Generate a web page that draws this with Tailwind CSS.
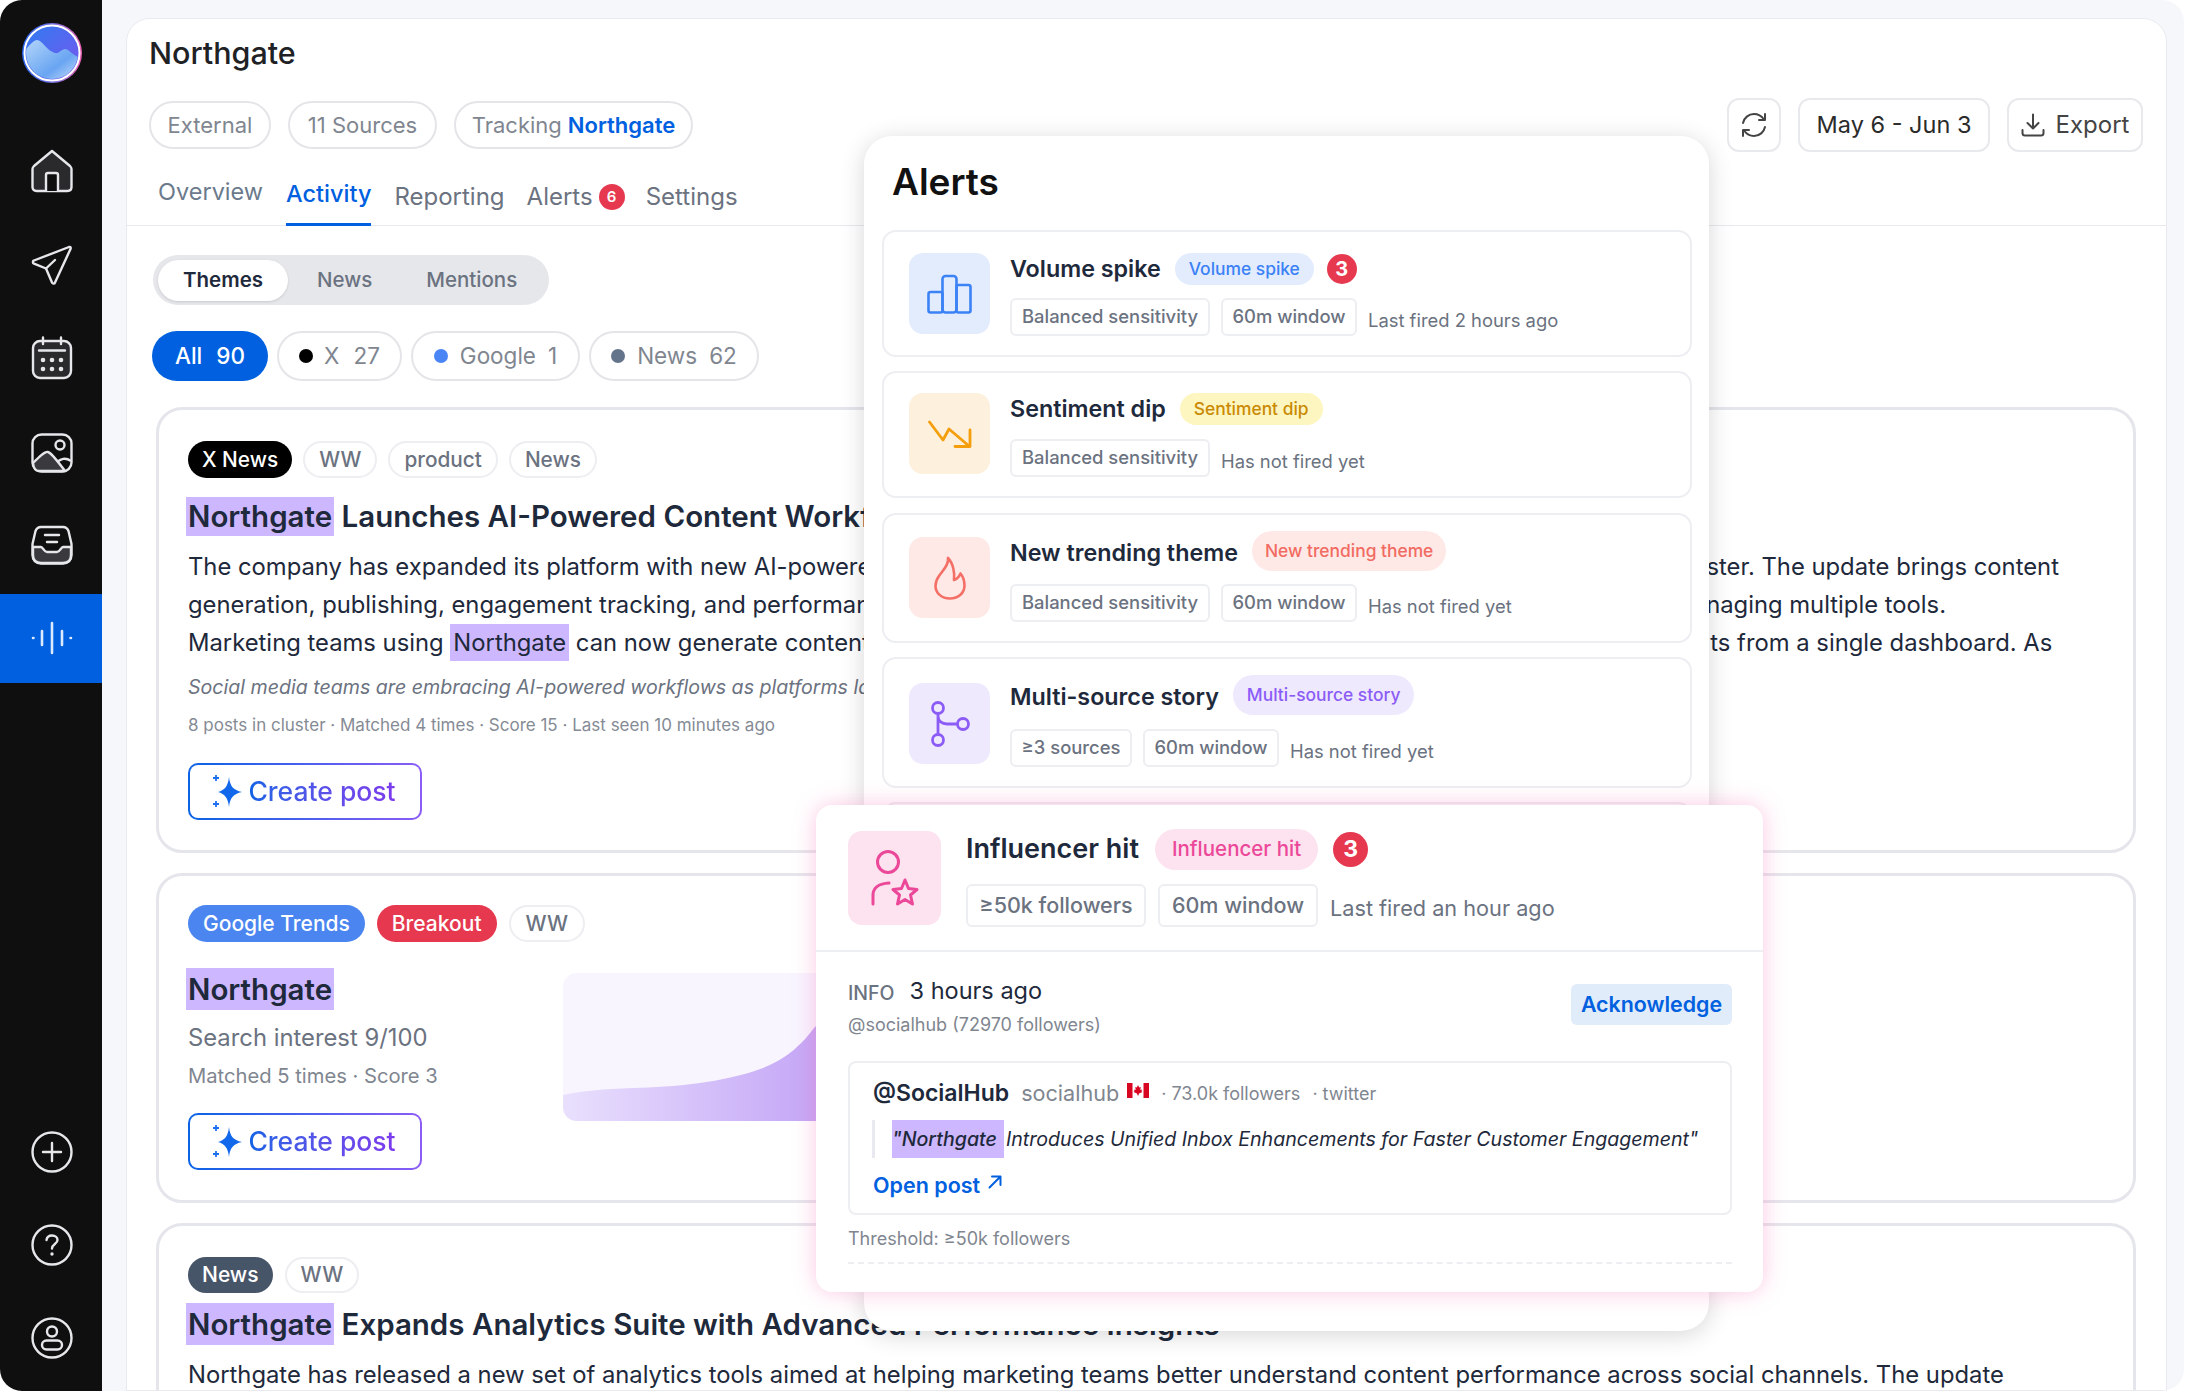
<!doctype html>
<html>
<head>
<meta charset="utf-8" />
<title>Northgate</title>
<script src="https://cdn.jsdelivr.net/npm/@tailwindcss/browser@4"></script>
</head>
<body class="bg-white">
<div class="relative flex w-[2184px] h-[1391px] rounded-[22px] overflow-hidden bg-[#f6f7fb] [font-family:Inter,'Liberation_Sans',sans-serif]">

  <!-- sidebar -->
  <aside class="flex flex-col w-[102px] h-full shrink-0 bg-[#0f0f0f] text-[#e5e7eb]">
    <div class="h-[124px] pt-[22px] pl-[2px] flex justify-center items-start">
      <svg width="62" height="62" viewBox="0 0 62 62">
        <defs>
          <linearGradient id="ring" x1="0" y1="0" x2="1" y2="0"><stop offset="0" stop-color="#2563eb"/><stop offset="0.55" stop-color="#7c6fe0"/><stop offset="1" stop-color="#ec5fb0"/></linearGradient>
          <linearGradient id="sky" x1="0" y1="0" x2="1" y2="1"><stop offset="0" stop-color="#2f7bf0"/><stop offset="1" stop-color="#7a55ee"/></linearGradient>
          <linearGradient id="hill" x1="0" y1="0" x2="1" y2="1"><stop offset="0" stop-color="#b4d6fa"/><stop offset="0.6" stop-color="#69a5f2"/><stop offset="1" stop-color="#d8e6fb"/></linearGradient>
          <clipPath id="disc"><circle cx="31" cy="31" r="26"/></clipPath>
        </defs>
        <circle cx="31" cy="31" r="30" fill="url(#ring)"/>
        <circle cx="31" cy="31" r="27.5" fill="url(#sky)" stroke="#fff" stroke-width="2"/>
        <g clip-path="url(#disc)">
          <path d="M4 28C9 23 13 18 16 18C21 18 26 29 34 31C38 32 41 27 44 27C48 27 52 34 60 36V60H4Z" fill="url(#hill)"/>
        </g>
      </svg>
    </div>
    <a class="h-[93.5px] pl-[2px] flex items-center justify-center">
      <svg width="42" height="44" viewBox="0 0 42 44" fill="#2a2a2c" stroke="#e5e7eb" stroke-width="2.4" stroke-linejoin="round"><path d="M21 2L39 17C40 18 40.500 19 40.500 20V38C40.500 40.500 39 42 36.500 42H5.500C3 42 1.500 40.500 1.500 38V20C1.500 19 2 18 3 17Z"/><path d="M15 42V26C15 25 16 24 17 24H25C26 24 27 25 27 26V42" fill="#0f0f0f"/></svg>
    </a>
    <a class="h-[93.5px] pl-[2px] pt-[2px] flex items-center justify-center">
      <svg width="42" height="42" viewBox="0 0 42 42" fill="none" stroke="#e5e7eb" stroke-width="2.4" stroke-linejoin="round" stroke-linecap="round"><path d="M38 3L3 16.500C1.500 17 1.500 19 3 19.700L15 24.500L21 38.500C21.700 40 23.500 40 24 38.500L39.500 5C40 3.500 39.500 2.500 38 3Z"/><path d="M15 24.500L24 16"/></svg>
    </a>
    <a class="h-[93.5px] pl-[2px] flex items-center justify-center">
      <svg width="42" height="44" viewBox="0 0 42 44" fill="none" stroke="#e5e7eb" stroke-width="2.4" stroke-linecap="round"><rect x="2" y="5" width="38" height="37" rx="7" fill="#2a2a2c"/><path d="M12 1.500V8M30 1.500V8M8 14.500H34"/><g fill="#e5e7eb" stroke="none"><circle cx="12" cy="24" r="2.300"/><circle cx="21" cy="24" r="2.300"/><circle cx="30" cy="24" r="2.300"/><circle cx="12" cy="33" r="2.300"/><circle cx="21" cy="33" r="2.300"/><circle cx="30" cy="33" r="2.300"/></g></svg>
    </a>
    <a class="h-[93.5px] pl-[2px] pt-[3px] flex items-center justify-center">
      <svg width="42" height="40" viewBox="0 0 42 40" fill="none" stroke="#e5e7eb" stroke-width="2.4" stroke-linejoin="round"><rect x="1.500" y="1.500" width="39" height="37" rx="9"/><path d="M2 30C8 24 14 18 17 19C21 20 30 33 34 38H8C5 38 2.500 35 2 30Z" fill="#3a3a3e"/><path d="M26 29C30 26 34 24 40 28" /><circle cx="29" cy="12" r="4.500"/></svg>
    </a>
    <a class="h-[93.5px] pl-[2px] pt-[1px] flex items-center justify-center">
      <svg width="42" height="40" viewBox="0 0 42 40" fill="none" stroke="#e5e7eb" stroke-width="2.4" stroke-linecap="round" stroke-linejoin="round"><path d="M10 2H32C35 2 36.500 3.500 37.500 6L40.500 19V30C40.500 35 37 38.500 32 38.500H10C5 38.500 1.500 35 1.500 30V19L4.500 6C5.500 3.500 7 2 10 2Z"/><path d="M2 22H10C12 22 13 27 16 27H26C29 27 30 22 32 22H40V30C40 35 37 38 32 38H10C5 38 2 35 2 30Z" fill="#3a3a3e"/><path d="M14 10H28M16 17H26"/></svg>
    </a>
    <a class="h-[89px] my-[2px] pl-[2px] flex items-center justify-center bg-[#0060df]">
      <svg width="42" height="34" viewBox="0 0 42 34" fill="none" stroke="#dbeafe" stroke-width="2.600" stroke-linecap="round"><path d="M2 17H2.500M11 10V24M21 2V32M31 10V24M39.500 17H40"/></svg>
    </a>
    <div class="mt-auto pb-[7px]">
      <a class="h-[93px] pl-[2px] flex items-center justify-center">
        <svg width="42" height="42" viewBox="0 0 42 42" fill="none" stroke="#e5e7eb" stroke-width="2.400" stroke-linecap="round"><circle cx="21" cy="21" r="19.500"/><path d="M21 12V30M12 21H30"/></svg>
      </a>
      <a class="h-[93px] pl-[2px] flex items-center justify-center">
        <svg width="42" height="42" viewBox="0 0 42 42" fill="none" stroke="#e5e7eb" stroke-width="2.400" stroke-linecap="round"><circle cx="21" cy="21" r="19.500"/><path d="M15.500 16C16 13 18 11.500 21 11.500C24.500 11.500 26.500 13.500 26.500 16C26.500 20 21 20 21 24.500"/><circle cx="21" cy="30" r="1.700" fill="#e5e7eb" stroke="none"/></svg>
      </a>
      <a class="h-[93px] pl-[2px] flex items-center justify-center">
        <svg width="42" height="42" viewBox="0 0 42 42" fill="none" stroke="#e5e7eb" stroke-width="2.400" stroke-linecap="round"><circle cx="21" cy="21" r="19.500"/><circle cx="21" cy="14.500" r="5"/><rect x="11" y="23.500" width="20" height="9" rx="4.500"/></svg>
      </a>
    </div>
  </aside>

  <!-- main panel -->
  <main class="ml-[24px] mt-[18px] w-[2041px] rounded-t-[24px] border border-[#e8eaf0] bg-white overflow-hidden">
    <h1 class="ml-[22px] mt-[16px] h-[36px] leading-[36px] text-[30.5px] font-medium text-[#202124]">Northgate</h1>

    <div class="mt-[27px] h-[54px] pl-[22px] pr-[23px] flex items-center justify-between">
      <div class="flex gap-[17px] text-[22px] text-[#7f8690]">
        <span class="h-[48px] w-[122px] flex items-center justify-center rounded-full border-2 border-[#e4e5e9]">External</span>
        <span class="h-[48px] w-[149px] flex items-center justify-center rounded-full border-2 border-[#e4e5e9]">11 Sources</span>
        <span class="h-[48px] w-[239px] flex items-center justify-center gap-[6px] rounded-full border-2 border-[#e4e5e9]">Tracking <b class="font-semibold text-[#0060df]">Northgate</b></span>
      </div>
      <div class="flex gap-[17px] text-[#333]">
        <button class="w-[54px] h-[54px] flex items-center justify-center rounded-[12px] border-2 border-[#e8e9ec]">
          <svg width="28" height="26" viewBox="0 0 28 26" fill="none" stroke="#444" stroke-width="2" stroke-linecap="round" stroke-linejoin="round"><path d="M3 11C4 6 8.500 2 14 2C18 2 21.500 4 24 7.500"/><path d="M25 2V8H19"/><path d="M25 15C24 20 19.500 24 14 24C10 24 6.500 22 4 18.500"/><path d="M3 24V18H9"/></svg>
        </button>
        <button class="w-[192px] h-[54px] rounded-[12px] border-2 border-[#e8e9ec] text-[23.5px] text-[#2b2b2b]">May 6 - Jun 3</button>
        <button class="w-[136px] h-[54px] flex items-center justify-center gap-[11px] rounded-[12px] border-2 border-[#e8e9ec] text-[24px] text-[#444]">
          <svg width="24" height="24" viewBox="0 0 24 24" fill="none" stroke="#444" stroke-width="2" stroke-linecap="round" stroke-linejoin="round"><path d="M12 1.500V15.500M6.500 10L12 15.500L17.500 10"/><path d="M1.500 17V20C1.500 21.500 2.500 22.500 4 22.500H20C21.500 22.500 22.500 21.500 22.500 20V17"/></svg>
          Export
        </button>
      </div>
    </div>

    <nav class="h-[74px] pl-[31px] flex items-start border-b border-[#e8e9ed] text-[24px] text-[#6b7280]">
      <span class="mt-[25px] leading-[30px] text-[23.5px] text-[#6b7a8c]">Overview</span>
      <span class="ml-[23px] h-[74px] pt-[27px] leading-[30px] text-[23.5px] font-medium text-[#0060df] border-b-[3px] border-[#0060df]">Activity</span>
      <span class="ml-[23px] mt-[30px] leading-[30px]">Reporting</span>
      <span class="ml-[22px] mt-[30px] leading-[30px] flex items-center gap-[6px]">Alerts<span class="w-[26px] h-[26px] flex items-center justify-center rounded-full bg-[#e63950] text-white text-[15px] font-semibold">6</span></span>
      <span class="ml-[21px] mt-[30px] leading-[30px]">Settings</span>
    </nav>

    <div class="pl-[26px]">
      <div class="mt-[29px] w-[396px] h-[50px] p-[5px] flex items-center rounded-full bg-[#e5e7eb] text-[20.5px] font-medium text-[#6b7280]">
        <span class="w-[130px] h-[41px] flex items-center justify-center rounded-full bg-white font-semibold text-[#1e293b] shadow-sm">Themes</span>
        <span class="ml-[29px]">News</span>
        <span class="ml-[54px]">Mentions</span>
      </div>

      <div class="mt-[26px] -ml-px flex gap-[9px] text-[22.5px] text-[#7f8690]">
        <span class="h-[50px] w-[116px] flex items-center justify-center gap-[14px] rounded-full bg-[#0060df] text-white font-medium"><span>All</span><span>90</span></span>
        <span class="h-[50px] w-[125px] flex items-center justify-center gap-[11px] rounded-full border-2 border-[#e4e5e9]"><i class="w-[14px] h-[14px] rounded-full bg-black"></i><span>X</span><span class="ml-[3px]">27</span></span>
        <span class="h-[50px] w-[169px] flex items-center justify-center gap-[12px] rounded-full border-2 border-[#e4e5e9]"><i class="w-[14px] h-[14px] rounded-full bg-[#4a85f6]"></i><span>Google</span><span>1</span></span>
        <span class="h-[50px] w-[170px] flex items-center justify-center gap-[12px] rounded-full border-2 border-[#e4e5e9]"><i class="w-[14px] h-[14px] rounded-full bg-[#64748b]"></i><span>News</span><span>62</span></span>
      </div>

      <!-- cards -->
      <section class="ml-[3px] mt-[26px] w-[1980px] flex flex-col gap-[20px]">
        <article class="h-[446px] pl-[29px] pt-[31px] rounded-[26px] border-[3px] border-[#e5e6eb]">
          <div class="flex gap-[11px] text-[20.8px] font-medium text-[#6b7280]">
            <span class="h-[37px] px-[14px] flex items-center rounded-full bg-black text-white">X News</span>
            <span class="h-[37px] px-[14px] flex items-center rounded-full border-2 border-[#eceef1]">WW</span>
            <span class="h-[37px] px-[14px] flex items-center rounded-full border-2 border-[#eceef1]">product</span>
            <span class="h-[37px] px-[14px] flex items-center rounded-full border-2 border-[#eceef1]">News</span>
          </div>
          <h2 class="mt-[19px] h-[39px] leading-[39px] text-[29.5px] font-semibold text-[#1e293b] whitespace-nowrap"><mark class="inline-block -ml-[2px] px-[2px] bg-[#cdb8ff] text-[#1e293b]">Northgate</mark> Launches AI-Powered Content Workflow Tools</h2>
          <p class="mt-[12px] text-[23.8px] leading-[38px] text-[#1e293b] whitespace-nowrap">The company has expanded its platform with new AI-powered features designed for their social media managers and every content cluster. The update brings content<br>generation, publishing, engagement tracking, and performance analytics into a single view, removing much of the daily overhead of managing multiple tools.<br>Marketing teams using <mark class="bg-[#cdb8ff] text-[#1e293b] py-[4px] px-[3px]">Northgate</mark> can now generate content, schedule campaigns, review engagement, and pull all performance insights from a single dashboard. As</p>
          <p class="mt-[10px] text-[19.6px] leading-[30px] italic text-[#6b7280] whitespace-nowrap">Social media teams are embracing AI-powered workflows as platforms launch new tools.</p>
          <p class="mt-[10px] text-[17px] leading-[26px] text-[#858b95]">8 posts in cluster · Matched 4 times · Score 15 · Last seen 10 minutes ago</p>
          <button class="mt-[25px] w-[234px] h-[57px] flex items-center justify-center gap-[6px] rounded-[10px] border-2 border-transparent [background:linear-gradient(white,white)_padding-box,linear-gradient(90deg,#0b63e5,#8b5cf6)_border-box]">
            <svg class="-ml-[2px]" width="30" height="36" viewBox="0 0 30 36"><path d="M17 3C18 12 21 16 30 18C21 20 18 24 17 33C16 24 13 20 6 18C13 16 16 12 17 3Z" fill="#1268ea"/><path d="M4 1V7M1 4H7M4 27V33M1 30H7" stroke="#1d6ff0" stroke-width="1.800"/></svg>
            <span class="text-[26.5px] font-medium bg-gradient-to-r from-[#0b63e5] to-[#7c3aed] bg-clip-text text-transparent">Create post</span>
          </button>
        </article>

        <article class="h-[330px] pl-[29px] pt-[29px] rounded-[26px] border-[3px] border-[#e5e6eb]">
          <div class="flex gap-[12px] text-[21px] font-medium">
            <span class="h-[37px] px-[15px] flex items-center rounded-full bg-[#4a85f0] text-white">Google Trends</span>
            <span class="h-[37px] px-[15px] flex items-center rounded-full bg-[#e63950] text-white">Breakout</span>
            <span class="h-[37px] px-[15px] flex items-center rounded-full border-2 border-[#eceef1] text-[#6b7280]">WW</span>
          </div>
          <div class="flex">
            <div class="w-[375px]">
              <h2 class="mt-[26px] h-[42px] leading-[42px] text-[29.5px] font-semibold text-[#1e293b]"><mark class="inline-block -ml-[2px] px-[2px] bg-[#cdb8ff] text-[#1e293b]">Northgate</mark></h2>
              <p class="mt-[12px] text-[23.8px] leading-[32px] text-[#6b7280]">Search interest 9/100</p>
              <p class="mt-[7px] text-[20.2px] leading-[30px] text-[#7f8690]">Matched 5 times · Score 3</p>
              <button class="mt-[22px] w-[234px] h-[57px] flex items-center justify-center gap-[6px] rounded-[10px] border-2 border-transparent [background:linear-gradient(white,white)_padding-box,linear-gradient(90deg,#0b63e5,#8b5cf6)_border-box]">
                <svg class="-ml-[2px]" width="30" height="36" viewBox="0 0 30 36"><path d="M17 3C18 12 21 16 30 18C21 20 18 24 17 33C16 24 13 20 6 18C13 16 16 12 17 3Z" fill="#1268ea"/><path d="M4 1V7M1 4H7M4 27V33M1 30H7" stroke="#1d6ff0" stroke-width="1.800"/></svg>
                <span class="text-[26.5px] font-medium bg-gradient-to-r from-[#0b63e5] to-[#7c3aed] bg-clip-text text-transparent">Create post</span>
              </button>
            </div>
            <svg class="mt-[31px]" width="837" height="148" viewBox="0 0 837 148">
              <defs><linearGradient id="area" x1="0" y1="0" x2="1" y2="0"><stop offset="0" stop-color="#e9e0fd"/><stop offset="0.32" stop-color="#c2a3f6"/><stop offset="1" stop-color="#a57ded"/></linearGradient></defs>
              <rect width="837" height="148" rx="14" fill="#f8f5ff"/>
              <path d="M0 122C20 118 40 116 70 115C110 114 160 110 200 95C225 85 240 70 251 55C280 25 320 15 837 5V134C837 142 831 148 823 148H14C6 148 0 142 0 134Z" fill="url(#area)"/>
            </svg>
          </div>
        </article>

        <article class="h-[300px] pl-[29px] pt-[31px] rounded-[26px] border-[3px] border-[#e5e6eb]">
          <div class="flex gap-[12px] text-[21px] font-medium text-[#6b7280]">
            <span class="h-[36px] px-[14px] flex items-center rounded-full bg-[#475569] text-white">News</span>
            <span class="h-[36px] px-[14px] flex items-center rounded-full border-2 border-[#eceef1]">WW</span>
          </div>
          <h2 class="mt-[10px] h-[42px] leading-[42px] text-[29.5px] font-semibold text-[#1e293b] whitespace-nowrap"><mark class="inline-block -ml-[2px] px-[2px] bg-[#cdb8ff] text-[#1e293b]">Northgate</mark> Expands Analytics Suite with Advanced Performance Insights</h2>
          <p class="mt-[11px] text-[23.8px] leading-[38px] text-[#1e293b] whitespace-nowrap">Northgate has released a new set of analytics tools aimed at helping marketing teams better understand content performance across social channels. The update</p>
        </article>
      </section>
    </div>
  </main>

  <!-- alerts panel -->
  <div class="absolute left-[864px] top-[136px] w-[845px] h-[1195px] pl-[18px] pr-[17px] rounded-[28px] bg-white overflow-hidden shadow-[0_4px_24px_rgba(0,0,0,0.16)]">
    <h2 class="mt-[24px] mb-[26px] ml-[10px] h-[44px] leading-[44px] text-[37px] font-semibold text-[#111]">Alerts</h2>

    <div class="flex h-[127px] mb-[14px] pl-[25px] pt-[21px] rounded-[14px] border-2 border-[#eceef2]">
      <div class="w-[81px] h-[81px] flex items-center justify-center rounded-[14px] bg-[#e3ecfd]">
        <svg width="45" height="40" viewBox="0 0 45 40" fill="none" stroke="#3b82f6" stroke-width="2.600" stroke-linejoin="round"><rect x="1.500" y="18" width="14" height="20.500" rx="2"/><rect x="15.500" y="2" width="14" height="36.500" rx="3"/><rect x="29.500" y="11" width="14" height="27.500" rx="2"/></svg>
      </div>
      <div class="ml-[20px]">
        <div class="flex items-center h-[32px]">
          <span class="text-[23.3px] font-semibold text-[#1e293b]">Volume spike</span>
          <span class="ml-[14px] h-[32px] px-[14px] flex items-center rounded-full bg-[#e3ecfd] text-[17.4px] font-medium text-[#3b82f6]">Volume spike</span>
          <span class="ml-[13px] w-[30px] h-[30px] flex items-center justify-center rounded-full bg-[#e63950] text-white text-[20px] font-bold">3</span>
        </div>
        <div class="mt-[13px] flex items-center gap-[11px] text-[18.4px] font-medium text-[#6b7280]">
          <span class="h-[38px] w-[200px] flex items-center justify-center rounded-[6px] border-2 border-[#eceef2]">Balanced sensitivity</span>
          <span class="h-[38px] w-[136px] flex items-center justify-center rounded-[6px] border-2 border-[#eceef2]">60m window</span>
          <span class="pt-[8px] font-normal">Last fired 2 hours ago</span>
        </div>
      </div>
    </div>

    <div class="flex h-[127px] mb-[15px] pl-[25px] pt-[20px] rounded-[14px] border-2 border-[#eceef2]">
      <div class="w-[81px] h-[81px] flex items-center justify-center rounded-[14px] bg-[#fdf0dc]">
        <svg width="44" height="28" viewBox="0 0 44 28" fill="none" stroke="#f59e0b" stroke-width="2.800" stroke-linecap="round" stroke-linejoin="round"><path d="M1.500 2L15 20L21 9L41 26"/><path d="M42 10V26.500H27"/></svg>
      </div>
      <div class="ml-[20px]">
        <div class="flex items-center h-[32px]">
          <span class="text-[23.3px] font-semibold text-[#1e293b]">Sentiment dip</span>
          <span class="ml-[14px] h-[32px] px-[14px] flex items-center rounded-full bg-[#fdf6c0] text-[17.4px] font-medium text-[#ca8a04]">Sentiment dip</span>
        </div>
        <div class="mt-[14px] flex items-center gap-[11px] text-[18.4px] font-medium text-[#6b7280]">
          <span class="h-[38px] w-[200px] flex items-center justify-center rounded-[6px] border-2 border-[#eceef2]">Balanced sensitivity</span>
          <span class="pt-[8px] font-normal">Has not fired yet</span>
        </div>
      </div>
    </div>

    <div class="flex h-[130px] mb-[14px] pl-[25px] pt-[16px] rounded-[14px] border-2 border-[#eceef2]">
      <div class="mt-[6px] w-[81px] h-[81px] flex items-center justify-center rounded-[14px] bg-[#fee9e6]">
        <svg width="32" height="44" viewBox="0 0 32 44" fill="none" stroke="#f47067" stroke-width="2.600" stroke-linejoin="round"><path d="M14 2C15 9 9 14 5 20C2 24 1.500 28 1.500 30C1.500 37 7.500 42.500 16 42.500C24.500 42.500 30.500 37 30.500 29.500C30.500 25 28.500 20 26.500 17.500C25 21 23 23 20 24C21 17 19 7 14 2Z"/></svg>
      </div>
      <div class="ml-[20px]">
        <div class="flex items-center h-[40px]">
          <span class="pt-[5px] text-[23.3px] font-semibold text-[#1e293b]">New trending theme</span>
          <span class="ml-[14px] h-[40px] px-[13px] flex items-center rounded-full bg-[#fee9e6] text-[17.4px] font-medium text-[#f26b62]">New trending theme</span>
        </div>
        <div class="mt-[13px] flex items-center gap-[11px] text-[18.4px] font-medium text-[#6b7280]">
          <span class="h-[38px] w-[200px] flex items-center justify-center rounded-[6px] border-2 border-[#eceef2]">Balanced sensitivity</span>
          <span class="h-[38px] w-[136px] flex items-center justify-center rounded-[6px] border-2 border-[#eceef2]">60m window</span>
          <span class="pt-[8px] font-normal">Has not fired yet</span>
        </div>
      </div>
    </div>

    <div class="flex h-[131px] mb-[14px] pl-[25px] pt-[16px] rounded-[14px] border-2 border-[#eceef2]">
      <div class="mt-[8px] w-[81px] h-[81px] flex items-center justify-center rounded-[14px] bg-[#efe9fe]">
        <svg width="42" height="46" viewBox="0 0 42 46" fill="none" stroke="#8b5cf6" stroke-width="2.800"><circle cx="9" cy="7" r="5.500"/><circle cx="9" cy="39" r="5.500"/><circle cx="34" cy="23" r="5.500"/><path d="M9 12.500V33.500M9 15C9 20 13 23 18 23H28.500"/></svg>
      </div>
      <div class="ml-[20px]">
        <div class="flex items-center h-[40px]">
          <span class="pt-[5px] text-[23.3px] font-semibold text-[#1e293b]">Multi-source story</span>
          <span class="ml-[14px] h-[40px] px-[14px] flex items-center rounded-full bg-[#efe9fe] text-[17.4px] font-medium text-[#8b5cf6]">Multi-source story</span>
        </div>
        <div class="mt-[14px] flex items-center gap-[11px] text-[18.4px] font-medium text-[#6b7280]">
          <span class="h-[38px] w-[122px] flex items-center justify-center rounded-[6px] border-2 border-[#eceef2]">≥3 sources</span>
          <span class="h-[38px] w-[136px] flex items-center justify-center rounded-[6px] border-2 border-[#eceef2]">60m window</span>
          <span class="pt-[8px] font-normal">Has not fired yet</span>
        </div>
      </div>
    </div>

    <div class="h-[200px] rounded-[14px] border-2 border-[#eceef2]"></div>
  </div>

  <!-- expanded influencer alert -->
  <div class="absolute left-[816px] top-[805px] w-[947px] h-[487px] rounded-[16px] bg-white shadow-[0_0_22px_rgba(244,114,182,0.4)]">
    <div class="h-[147px] pl-[32px] pt-[24px] pb-[24px] flex border-b-2 border-[#eceef2]">
      <div class="mt-[2px] w-[93px] h-[94px] flex items-center justify-center rounded-[14px] bg-[#fce3ef]">
        <svg width="48" height="56" viewBox="0 0 48 56" fill="none" stroke="#ec4899" stroke-width="3" stroke-linecap="round" stroke-linejoin="round"><circle cx="17" cy="12" r="10.500"/><path d="M2 54V45C2 38 8 33.500 18 33"/><path d="M34 30L37.500 38.500L46 39.500L39.500 45L41.500 54L34 49.500L26.500 54L28.500 45L22 39.500L30.500 38.500Z"/></svg>
      </div>
      <div class="ml-[25px]">
        <div class="flex items-center h-[41px]">
          <span class="text-[27px] font-semibold text-[#1e293b]">Influencer hit</span>
          <span class="ml-[16px] h-[41px] px-[17px] flex items-center rounded-full bg-[#fce3ef] text-[20.5px] font-medium text-[#ec4899]">Influencer hit</span>
          <span class="ml-[15px] w-[35px] h-[35px] flex items-center justify-center rounded-full bg-[#e63950] text-white text-[23px] font-bold">3</span>
        </div>
        <div class="mt-[14px] flex items-center gap-[12px] text-[21.5px] font-medium text-[#6b7280]">
          <span class="h-[43px] w-[180px] flex items-center justify-center rounded-[6px] border-2 border-[#eceef2]">≥50k followers</span>
          <span class="h-[43px] w-[160px] flex items-center justify-center rounded-[6px] border-2 border-[#eceef2]">60m window</span>
          <span class="pt-[6px] font-normal text-[21.7px]">Last fired an hour ago</span>
        </div>
      </div>
    </div>

    <div class="pl-[32px] pr-[31px]">
      <div class="pt-[22px] flex items-start justify-between">
        <div>
          <div class="flex items-center gap-[15px]">
            <span class="pt-[5px] text-[19.5px] font-medium text-[#6b7280] uppercase">Info</span>
            <span class="text-[23.5px] leading-[34px] text-[#1e293b]">3 hours ago</span>
          </div>
          <p class="mt-[3px] text-[18px] leading-[28px] text-[#7f8690]">@socialhub (72970 followers)</p>
        </div>
        <button class="mt-[10px] w-[161px] h-[41px] rounded-[6px] bg-[#e0ecfa] text-[21.4px] font-semibold text-[#0060df]">Acknowledge</button>
      </div>

      <div class="mt-[22px] h-[154px] pl-[23px] pr-[22px] pt-[14px] rounded-[8px] border-2 border-[#eceef2]">
        <div class="flex items-center h-[32px] whitespace-nowrap">
          <span class="text-[23px] font-semibold text-[#1e293b]">@SocialHub</span>
          <span class="ml-[12px] text-[21.6px] text-[#7f8690]">socialhub</span>
          <svg class="ml-[8px] -mt-[5px]" width="22" height="15" viewBox="0 0 22 15"><rect width="22" height="15" fill="#fff"/><rect width="5.500" height="15" fill="#d80621"/><rect x="16.500" width="5.500" height="15" fill="#d80621"/><path d="M11 2L12.200 4.500L13.800 4L13.300 7L15 6.500L14.500 8.300L15.500 9L12 10.500L11.400 12.500H10.600L10 10.500L6.500 9L7.500 8.300L7 6.500L8.700 7L8.200 4L9.800 4.500Z" fill="#d80621"/></svg>
          <span class="ml-[12px] text-[18px] text-[#7f8690]">· 73.0k followers</span>
          <span class="ml-[12px] text-[18px] text-[#7f8690]">· twitter</span>
        </div>
        <div class="-ml-px mt-[11px] h-[38px] flex items-center border-l-[3px] border-[#e8eaf0] pl-[17px] whitespace-nowrap text-[19.6px] italic text-[#1e293b]">
          <mark class="inline-flex shrink-0 items-center h-[38px] w-[112px] bg-[#cdb8ff] text-[#1e293b] font-medium">"Northgate</mark><span class="ml-[2px]">Introduces Unified Inbox Enhancements for Faster Customer Engagement"</span>
        </div>
        <a class="mt-[11px] flex items-center gap-[8px] text-[21.5px] font-semibold text-[#0060df]">Open post
          <svg class="-mt-[6px]" width="14" height="14" viewBox="0 0 14 14" fill="none" stroke="#0060df" stroke-width="2" stroke-linecap="round" stroke-linejoin="round"><path d="M1.500 12.500L12 2M4 1.500H12.500V10"/></svg>
        </a>
      </div>

      <p class="mt-[10px] text-[18px] leading-[28px] text-[#7f8690]">Threshold: ≥50k followers</p>
      <div class="mt-[9px] border-t-2 border-dashed border-[#eceef2]"></div>
    </div>
  </div>
</div>
</body>
</html>
